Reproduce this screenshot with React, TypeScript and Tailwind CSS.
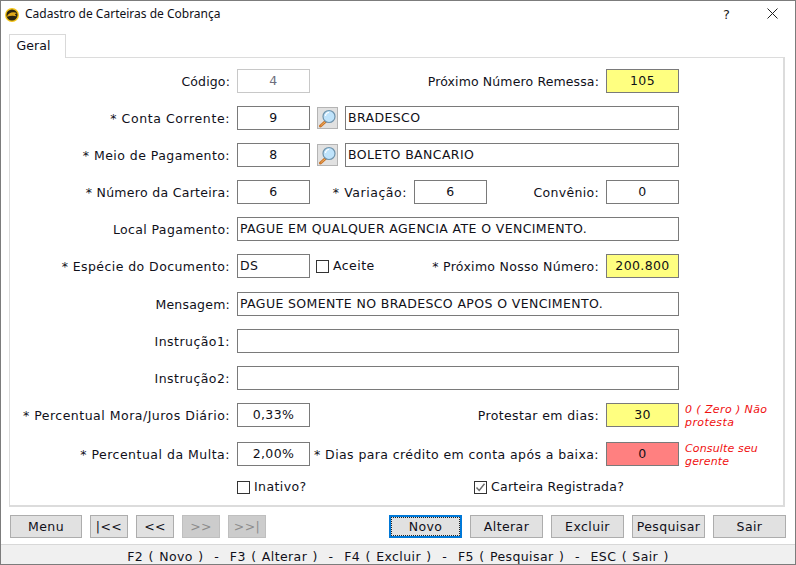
import type { ReactNode } from "react";

const ui = "font-['DejaVu_Sans','Liberation_Sans',sans-serif]";

function Label({ width, track = "tracking-[0.4px]", children }: { width: string; track?: string; children: ReactNode }) {
  return <span className={`${width} ${track} h-6 shrink-0 text-right text-[12.5px] leading-[25px] text-[#10101a] whitespace-nowrap`}>{children}</span>;
}

function Field({
  value,
  className = "w-[73px]",
  align = "text-center",
  tone = "bg-white border-[#7a7a7a] text-[#101018]",
}: {
  value?: string;
  className?: string;
  align?: string;
  tone?: string;
}) {
  return <div className={`${className} ${align} ${tone} h-6 shrink-0 border px-[2px] text-[12.5px] tracking-[0.38px] leading-[21px] whitespace-nowrap overflow-hidden`}>{value}</div>;
}

function Lookup() {
  return (
    <div className="mx-[7px] h-[22px] w-[21px] shrink-0 border border-[#b4b4b4] bg-[#e1e1e1]">
      <svg width="19" height="20" viewBox="0 0 19 20">
        <path d="M8 13 2.5 18" stroke="#c9742a" strokeWidth="3" strokeLinecap="round" />
        <path d="M7.5 13.5 3 17.5" stroke="#f2b25f" strokeWidth="1" strokeLinecap="round" />
        <circle cx="11" cy="8.5" r="6" fill="#bfe3fb" stroke="#6f94ad" strokeWidth="1.2" />
        <path d="M7.5 8a3.8 3.8 0 0 1 3.5-3.5" stroke="#ffffff" strokeWidth="1.2" fill="none" />
      </svg>
    </div>
  );
}

function Check({ checked = false }: { checked?: boolean }) {
  return (
    <div className="flex h-[13px] w-[13px] shrink-0 items-center justify-center border border-[#333] bg-white">
      {checked && (
        <svg width="11" height="11" viewBox="0 0 11 11">
          <path d="M1.5 5.5 4.2 8.5 9.5 1.8" stroke="#6a6a6a" strokeWidth="1.4" fill="none" />
        </svg>
      )}
    </div>
  );
}

function Hint({ track, children }: { track: string; children: ReactNode }) {
  return <div className={`${track} ml-[6px] w-[96px] text-[11px] leading-[13px] italic text-[#f01010]`}>{children}</div>;
}

function Btn({ children, className = "w-[73px]", disabled = false }: { children: ReactNode; className?: string; disabled?: boolean }) {
  return (
    <div
      className={`${className} flex h-[23px] shrink-0 items-center justify-center border pt-px text-[12.5px] tracking-[0.4px] ${
        disabled ? "border-[#bfbfbf] bg-[#cccccc] text-[#8c8c8c]" : "border-[#adadad] bg-[#e1e1e1] text-[#10101a]"
      }`}
    >
      {children}
    </div>
  );
}

export default function App() {
  return (
    <div className={`${ui} flex h-[565px] w-[796px] flex-col overflow-hidden border border-[#7c7c7c] bg-white`}>
      {/* Title bar */}
      <div className="flex h-[27px] shrink-0 items-center pl-[4px]">
        <svg width="14" height="14" viewBox="0 0 14 14" className="shrink-0">
          <circle cx="7" cy="7" r="7" fill="#f5c518" />
          <circle cx="7" cy="7" r="5.6" fill="#2b2410" />
          <path d="M1.8 8.8C3.5 5 7 3.2 12 5L9.8 6.3 11.5 8.3C8.5 7.5 5.5 7.5 1.8 8.8Z" fill="#e0a81a" />
        </svg>
        <span className="ml-[6px] -mt-[2px] font-['Noto_Sans',sans-serif] text-[12px] text-[#101018]">Cadastro de Carteiras de Cobrança</span>
        <span className="ml-auto text-[13px] text-[#202020]">?</span>
        <svg width="11" height="11" viewBox="0 0 11 11" className="ml-[37px] mr-[17px] -mt-[2px]">
          <path d="M.5.5l10 10M10.5.5l-10 10" stroke="#202020" />
        </svg>
      </div>

      {/* Tab */}
      <div className="ml-2 flex h-[24px] w-[57px] shrink-0 items-center justify-center border-x border-t border-[#d9d9d9] pr-[8px] text-[12.5px] tracking-[0.1px] text-[#10101a] mt-[6px] -mb-px relative z-10 bg-white">
        Geral
      </div>

      {/* Panel */}
      <div className="mx-2 flex h-[450px] w-[776px] shrink-0 flex-col gap-[13px] border border-r-2 border-b-2 border-[#dcdcdc] pt-[11px]">
        <div className="flex">
          <Label width="w-[220px]" track="tracking-[0.14px]">Código:</Label>
          <div className="ml-[7px]"><Field value="4" tone="bg-white border-[#c8c8c8] text-[#6d6d7d]" /></div>
          <Label width="w-[289px]" track="tracking-[0.13px]">Próximo Número Remessa:</Label>
          <div className="ml-[7px]"><Field value="105" tone="bg-[#ffff80] border-[#7a7a7a] text-[#101018]" /></div>
        </div>

        <div className="flex items-center">
          <Label width="w-[220px]" track="tracking-[0.6px]">* Conta Corrente:</Label>
          <div className="ml-[7px]"><Field value="9" /></div>
          <Lookup />
          <Field value="BRADESCO" align="text-left" className="w-[334px]" />
        </div>

        <div className="flex items-center">
          <Label width="w-[220px]" track="tracking-[0.45px]">* Meio de Pagamento:</Label>
          <div className="ml-[7px]"><Field value="8" /></div>
          <Lookup />
          <Field value="BOLETO BANCARIO" align="text-left" className="w-[334px]" />
        </div>

        <div className="flex">
          <Label width="w-[220px]" track="tracking-[0.3px]">* Número da Carteira:</Label>
          <div className="ml-[7px]"><Field value="6" /></div>
          <Label width="w-[97px]" track="tracking-[0.55px]">* Variação:</Label>
          <div className="ml-[7px]"><Field value="6" /></div>
          <Label width="w-[112px]" track="tracking-[0.33px]">Convênio:</Label>
          <div className="ml-[7px]"><Field value="0" /></div>
        </div>

        <div className="flex">
          <Label width="w-[220px]" track="tracking-[0.37px]">Local Pagamento:</Label>
          <div className="ml-[7px]"><Field value="PAGUE EM QUALQUER AGENCIA ATE O VENCIMENTO." align="text-left" className="w-[442px]" /></div>
        </div>

        <div className="flex">
          <Label width="w-[220px]" track="tracking-[0.43px]">* Espécie do Documento:</Label>
          <div className="ml-[7px]"><Field value="DS" align="text-left" /></div>
          <div className="ml-[6px] flex w-[60px] items-center gap-1 text-[12.5px] tracking-[0.45px] text-[#10101a]">
            <Check />
            <span>Aceite</span>
          </div>
          <Label width="w-[223px]" track="tracking-[0.3px]">* Próximo Nosso Número:</Label>
          <div className="ml-[7px]"><Field value="200.800" tone="bg-[#ffff80] border-[#7a7a7a] text-[#101018]" /></div>
        </div>

        <div className="flex pt-px">
          <Label width="w-[220px]" track="tracking-[0.22px]">Mensagem:</Label>
          <div className="ml-[7px]"><Field value="PAGUE SOMENTE NO BRADESCO APOS O VENCIMENTO." align="text-left" className="w-[442px]" /></div>
        </div>

        <div className="flex">
          <Label width="w-[220px]" track="tracking-[0.45px]">Instrução1:</Label>
          <div className="ml-[7px]"><Field align="text-left" className="w-[442px]" /></div>
        </div>

        <div className="flex">
          <Label width="w-[220px]" track="tracking-[0.45px]">Instrução2:</Label>
          <div className="ml-[7px]"><Field align="text-left" className="w-[442px]" /></div>
        </div>

        <div className="flex">
          <Label width="w-[220px]" track="tracking-[0.5px]">* Percentual Mora/Juros Diário:</Label>
          <div className="ml-[7px]"><Field value="0,33%" /></div>
          <Label width="w-[289px]" track="tracking-[0.39px]">Protestar em dias:</Label>
          <div className="ml-[7px]"><Field value="30" tone="bg-[#ffff80] border-[#7a7a7a] text-[#101018]" /></div>
          <Hint track="tracking-[0.4px]">0 ( Zero ) Não protesta</Hint>
        </div>

        <div className="flex">
          <Label width="w-[220px]" track="tracking-[0.5px]">* Percentual da Multa:</Label>
          <div className="ml-[7px]"><Field value="2,00%" /></div>
          <Label width="w-[289px]" track="tracking-[0.41px]">* Dias para crédito em conta após a baixa:</Label>
          <div className="ml-[7px]"><Field value="0" tone="bg-[#ff8080] border-[#7a7a7a] text-[#101018]" /></div>
          <Hint track="tracking-[0.15px]">Consulte seu gerente</Hint>
        </div>

        <div className="flex h-4 items-center text-[12.5px] tracking-[0.4px] text-[#10101a] -mt-[2px]">
          <div className="ml-[227px] flex w-[237px] items-center gap-1">
            <Check />
            <span>Inativo?</span>
          </div>
          <div className="flex items-center gap-1 tracking-[0.25px]">
            <Check checked />
            <span>Carteira Registrada?</span>
          </div>
        </div>
      </div>

      {/* Action buttons */}
      <div className="mt-[8px] flex h-[23px] shrink-0 pl-[9px]">
        <div className="flex gap-2">
          <Btn className="w-[72px]">Menu</Btn>
          <Btn className="w-[38px]">|&lt;&lt;</Btn>
          <Btn className="w-[38px]">&lt;&lt;</Btn>
          <Btn className="w-[38px]" disabled>&gt;&gt;</Btn>
          <Btn className="w-[38px]" disabled>&gt;&gt;|</Btn>
        </div>
        <div className="ml-[123px] flex gap-2">
          <div className="flex h-[23px] w-[73px] items-center justify-center border-2 border-[#0078d7] bg-[#e1e1e1] pt-px text-[12.5px] tracking-[0.4px] text-[#10101a] outline-1 -outline-offset-3 outline-dotted outline-[#222]">
            Novo
          </div>
          <Btn>Alterar</Btn>
          <Btn>Excluir</Btn>
          <Btn>Pesquisar</Btn>
          <Btn>Sair</Btn>
        </div>
      </div>

      {/* Status bar */}
      <div className="mt-[6px] flex flex-1 items-center justify-center border-t border-[#d8d8d8] bg-[#f0f0f0] pt-[3px] text-[12.5px] tracking-[0.4px] [word-spacing:1px] whitespace-pre text-[#10101a]">
        F2 ( Novo )  -  F3 ( Alterar )  -  F4 ( Excluir )  -  F5 ( Pesquisar )  -  ESC ( Sair )
      </div>
    </div>
  );
}
